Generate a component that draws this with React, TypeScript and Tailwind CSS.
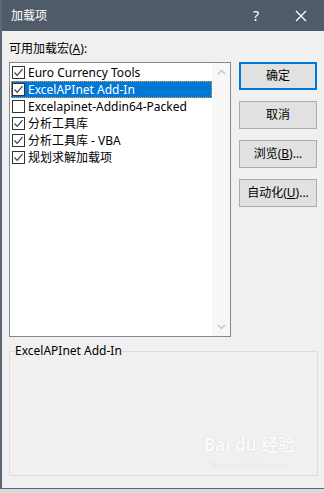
import React from "react";

const font = { fontFamily: '"Noto Sans", "Noto Sans CJK SC", sans-serif' };

type Item = { label: string; checked: boolean; selected?: boolean };

const items: Item[] = [
  { label: "Euro Currency Tools", checked: true },
  { label: "ExcelAPInet Add-In", checked: true, selected: true },
  { label: "Excelapinet-Addin64-Packed", checked: false },
  { label: "分析工具库", checked: true },
  { label: "分析工具库 - VBA", checked: true },
  { label: "规划求解加载项", checked: true },
];

function CheckBox({ checked }: { checked: boolean }) {
  return (
    <div className="w-[13px] h-[13px] shrink-0 bg-white border border-[#333333] flex items-center justify-center">
      {checked && (
        <svg width="11" height="11" viewBox="0 0 11 11">
          <path d="M1.5 5.5 L4.2 8.3 L9.5 2.2" fill="none" stroke="#3c3c3c" strokeWidth="1.2" />
        </svg>
      )}
    </div>
  );
}

function DlgButton({ children, isDefault }: { children: React.ReactNode; isDefault?: boolean }) {
  return (
    <div
      className={`h-[28px] w-[78px] flex items-center justify-center bg-[#e1e1e1] text-[12px] text-black ${
        isDefault ? "border-2 border-[#0078d7]" : "border border-[#adadad]"
      }`}
    >
      {children}
    </div>
  );
}

export default function App() {
  return (
    <div className="w-[324px] h-[493px] bg-[#dadada] overflow-hidden" style={font}>
      <div className="w-[324px] h-[489px] border-l-2 border-b border-[#5c6775] bg-[#f0f0f0] flex flex-col">
        {/* title bar */}
        <div className="h-[31px] bg-[#4f5b69] flex items-center text-white shrink-0">
          <span className="pl-[9px] text-[12px] flex-1">加载项</span>
          <span className="w-[44px] text-center text-[14px]">?</span>
          <span className="w-[46px] flex justify-center">
            <svg width="12" height="12" viewBox="0 0 12 12">
              <path d="M1 1 L11 11 M11 1 L1 11" stroke="#ffffff" strokeWidth="1.3" />
            </svg>
          </span>
        </div>

        <div className="pl-[7px] pr-[6px] pt-[10px] flex flex-col">
          <div className="text-[12px] leading-[16px] text-black">
            可用加载宏(<span className="underline">A</span>):
          </div>

          <div className="flex mt-[5px] gap-[8px]">
            {/* list box */}
            <div className="w-[222px] h-[275px] border border-[#828790] bg-white flex">
              <div className="flex-1 pt-[1px] pl-[1px]">
                {items.map((it) => (
                  <div
                    key={it.label}
                    className={`h-[17px] flex items-center gap-[3px] pl-[1px] text-[12px] whitespace-nowrap ${
                      it.selected ? "bg-[#0078d7] text-white outline outline-1 outline-dotted outline-[#f0a030] -outline-offset-1" : "text-black"
                    }`}
                  >
                    <CheckBox checked={it.checked} />
                    <span>{it.label}</span>
                  </div>
                ))}
              </div>
              <div className="w-[18px] bg-[#f7f7f7] flex flex-col justify-between items-center py-[6px]">
                <svg width="9" height="6" viewBox="0 0 9 6">
                  <path d="M1 5 L4.5 1.5 L8 5" fill="none" stroke="#c4c4c4" strokeWidth="1.4" />
                </svg>
                <svg width="9" height="6" viewBox="0 0 9 6">
                  <path d="M1 1 L4.5 4.5 L8 1" fill="none" stroke="#c4c4c4" strokeWidth="1.4" />
                </svg>
              </div>
            </div>

            {/* buttons */}
            <div className="flex flex-col gap-[11px]">
              <DlgButton isDefault>确定</DlgButton>
              <DlgButton>取消</DlgButton>
              <DlgButton>
                浏览(<span className="underline">B</span>)...
              </DlgButton>
              <DlgButton>
                自动化(<span className="underline">U</span>)...
              </DlgButton>
            </div>
          </div>

          {/* group box */}
          <div className="relative mt-[14px] w-[309px] h-[125px] border border-[#dcdcdc]">
            <span className="absolute left-[5px] -top-[9px] bg-[#f0f0f0] text-[12px] leading-[16px] text-black">
              ExcelAPInet Add-In
            </span>
            <div className="absolute right-[22px] bottom-[4px] flex flex-col items-center gap-[2px] text-[#fbfbfb] [text-shadow:0_0_1px_#c8c8c8]">
              <span className="text-[17px] font-bold leading-[24px]">Bai du 经验</span>
              <span className="text-[9px] leading-[12px]">jingyan.baidu.com</span>
            </div>
          </div>
        </div>
      </div>
    </div>
  );
}
